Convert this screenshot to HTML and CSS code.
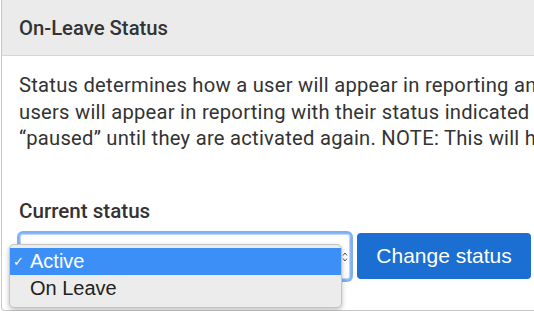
FILE: index.html
```html
<!DOCTYPE html>
<html lang="en">
<head>
    <meta charset="UTF-8">
    <meta name="viewport" content="width=device-width, initial-scale=1.0">
    <title>On-Leave Status</title>
    <link rel="stylesheet" href="styles.css">
</head>
<body>

    <div class="panel">
        <div class="panel-heading">On-Leave Status</div>
        <div class="panel-body">
            <p class="info">Status determines how a user will appear in reporting and billing. On-leave<br>
                users will appear in reporting with their status indicated as on leave, and will be<br>
                &ldquo;paused&rdquo; until they are activated again. NOTE: This will have no effect on billing.</p>

            <div class="label">Current status</div>
            <div class="status-row">
                <div class="select-wrap">
                    <div class="select-box">
                        <svg class="stepper" width="6" height="12" viewBox="0 0 6 12">
                            <path d="M1 4.5 L3 2 L5 4.5 M1 7.5 L3 10 L5 7.5" fill="none" stroke="#555" stroke-width="1"/>
                        </svg>
                    </div>
                    <ul class="dropdown">
                        <li class="option selected"><span class="check">&#10003;</span>Active</li>
                        <li class="option">On Leave</li>
                    </ul>
                </div>
                <button class="btn-primary">Change status</button>
            </div>
        </div>
    </div>

</body>
</html>
```

FILE: styles.css
```css
body{
    margin: 0;
    background: #fff;
    overflow: hidden;
    font-family: Roboto, "Liberation Sans", sans-serif;
    color: #333;
}
.panel{
    margin-left: 1px;
    width: 900px;
    border: 1px solid #c8c8c8;
    border-top: 0;
    border-radius: 0 0 4px 4px;
}
.panel-heading{
    height: 56px;
    box-sizing: border-box;
    padding: 0 17px;
    display: flex;
    align-items: center;
    background-color: #ebebeb;
    border-bottom: 1px solid #d6d6d6;
    font-size: 20.3px;
    font-weight: 500;
}
.panel-body{
    padding: 16px 17px 30px 17px;
}
.info{
    margin: 0;
    font-size: 20.2px;
    letter-spacing: 0.25px;
    line-height: 26.5px;
    white-space: nowrap;
}
.label{
    margin-top: 46px;
    font-size: 20.6px;
    font-weight: 500;
    line-height: 26px;
}
.status-row{
    margin-top: 9px;
    display: flex;
    gap: 6px;
}
.select-wrap{
    position: relative;
    width: 332px;
    height: 47px;
}
.select-box{
    height: 100%;
    box-sizing: border-box;
    border: 1px solid #8fb8f0;
    border-radius: 4px;
    box-shadow: 0 0 0 2px #7fb0f5, inset 0 0 0 1px #bcd6fa;
    background: #fff;
    display: flex;
    justify-content: flex-end;
    align-items: flex-start;
    padding: 17px 2px 0 0;
}
.dropdown{
    position: absolute;
    left: -10px;
    top: 11px;
    width: 333px;
    margin: 0;
    padding: 3px 0 5px 0;
    list-style: none;
    box-sizing: border-box;
    background: #ececec;
    border: 1px solid #c4c4c4;
    border-radius: 5px;
    box-shadow: 0 2px 5px rgba(0, 0, 0, 0.25);
    font-family: "Liberation Sans", sans-serif;
    font-size: 20px;
    color: #222;
}
.option{
    height: 27px;
    line-height: 27px;
    padding-left: 20px;
    position: relative;
}
.option.selected{
    background: #3b8ff6;
    color: #fff;
}
.check{
    position: absolute;
    left: 3px;
    font-size: 13px;
    font-family: "DejaVu Sans", sans-serif;
}
.btn-primary{
    width: 174px;
    height: 46px;
    border: 0;
    border-radius: 4px;
    background-color: #1b6fd2;
    color: #fff;
    font-family: "Liberation Sans", sans-serif;
    font-size: 21px;
}
```
